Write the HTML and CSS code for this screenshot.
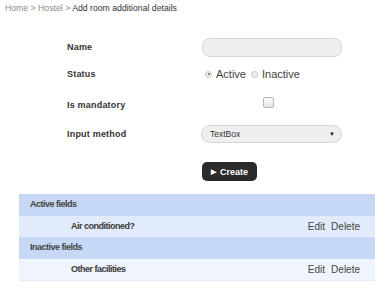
FILE: index.html
```html
<!DOCTYPE html>
<html lang="en">
<head>
  <meta charset="UTF-8" />
  <title>Add room additional details</title>
  <link rel="stylesheet" href="styles.css">
</head>
<body>
  <div class="breadcrumb">
    <span class="crumb">Home</span> &gt; <span class="crumb">Hostel</span> &gt; <span class="current">Add room additional details</span>
  </div>

  <form class="formulario">
    <div class="linha linha-nome">
      <label class="rotulo">Name</label>
      <div class="campo"><input type="text" class="caixa-texto"></div>
    </div>
    <div class="linha linha-status">
      <label class="rotulo">Status</label>
      <div class="campo opcoes">
        <span class="radio marcado"></span><span class="opcao">Active</span>
        <span class="radio"></span><span class="opcao">Inactive</span>
      </div>
    </div>
    <div class="linha linha-obrigatorio">
      <label class="rotulo">Is mandatory</label>
      <div class="campo centro"><span class="caixa-marcar"></span></div>
    </div>
    <div class="linha linha-metodo">
      <label class="rotulo">Input method</label>
      <div class="campo">
        <div class="selecao"><span>TextBox</span><span class="seta">▼</span></div>
      </div>
    </div>
    <div class="linha botoes">
      <div class="rotulo"></div>
      <div class="campo"><button type="button" class="botao-criar"><span class="play">▶</span>Create</button></div>
    </div>
  </form>

  <div class="tabela">
    <div class="cabecalho">Active fields</div>
    <div class="item escuro">
      <span class="nome">Air conditioned?</span>
      <span class="acoes"><span>Edit</span><span>Delete</span></span>
    </div>
    <div class="cabecalho">Inactive fields</div>
    <div class="item claro">
      <span class="nome">Other facilities</span>
      <span class="acoes"><span>Edit</span><span>Delete</span></span>
    </div>
  </div>
</body>
</html>
```

FILE: styles.css
```css
body {
  margin: 0;
  font-family: 'Liberation Sans', Arial, sans-serif;
  background: #fff;
  color: #333;
}

.breadcrumb {
  padding: 3px 5px 0;
  font-size: 8.7px;
  height: 14px;
  color: #8a8a8a;
}

.breadcrumb .current {
  color: #333;
}

.formulario {
  padding: 0 0 0 67px;
  margin-top: 16px;
}

.linha {
  display: flex;
  align-items: center;
  height: 28px;
}

.linha-status {
  height: 26px;
}

.linha-obrigatorio {
  height: 35px;
}

.linha-metodo {
  height: 24px;
}

.rotulo {
  flex-shrink: 0;
  width: 135px;
  font-size: 9px;
  font-weight: bold;
  color: #333;
  letter-spacing: 0.2px;
}

.campo {
  flex-shrink: 0;
  box-sizing: border-box;
  width: 140px;
}

.caixa-texto {
  display: block;
  box-sizing: border-box;
  width: 140px;
  height: 19px;
  border: 1px solid #d6d6d6;
  border-radius: 8px;
  background: #efefef;
  margin: 0;
}

.opcoes {
  display: flex;
  align-items: center;
  padding-left: 3px;
}

.radio {
  box-sizing: border-box;
  width: 7px;
  height: 7px;
  border-radius: 50%;
  border: 1px solid #c8c8c8;
  background: #ececec;
  margin-right: 4px;
  position: relative;
}

.radio.marcado::after {
  content: "";
  position: absolute;
  left: 1.5px;
  top: 1.5px;
  width: 2px;
  height: 2px;
  border-radius: 50%;
  background: #666;
}

.opcao {
  font-size: 11px;
  color: #444;
  margin-right: 5px;
}

.centro {
  display: flex;
  padding-left: 61px;
  margin-top: -4px;
}

.caixa-marcar {
  width: 9px;
  height: 9px;
  border: 1px solid #b5b5b5;
  border-radius: 2px;
  background: linear-gradient(#fafafa, #e6e6e6);
}

.selecao {
  box-sizing: border-box;
  width: 141px;
  height: 18px;
  border: 1px solid #d6d6d6;
  border-radius: 9px;
  background: #efefef;
  display: flex;
  align-items: center;
  justify-content: space-between;
  padding: 0 6px 0 8px;
  font-size: 8.5px;
  color: #333;
  margin-left: -1px;
}

.seta {
  font-size: 6px;
  color: #222;
}

.botoes {
  margin-top: 16px;
  height: 19px;
}

.botao-criar {
  display: flex;
  align-items: center;
  height: 19px;
  width: 55px;
  background: #2b2b2b;
  color: #fff;
  border: none;
  border-radius: 5px;
  font-family: 'Liberation Sans', Arial, sans-serif;
  font-size: 9px;
  font-weight: bold;
  padding: 0 0 0 9px;
}

.play {
  font-size: 7px;
  margin-right: 4px;
}

.tabela {
  margin: 13px 0 0 19px;
  font-size: 9px;
}

.cabecalho {
  height: 21.5px;
  line-height: 21.5px;
  background: #c7d7f6;
  font-weight: bold;
  padding-left: 11px;
  color: #444;
  letter-spacing: -0.5px;
}

.item {
  height: 21.5px;
  display: flex;
  align-items: center;
  justify-content: space-between;
  padding-left: 52px;
  color: #333;
}

.item .nome {
  font-weight: bold;
  letter-spacing: -0.5px;
  color: #3a3a3a;
}

.escuro {
  background: #e2ebfb;
}

.claro {
  background: #eff4fd;
  border-bottom: 1px solid #e5eaf5;
}

.acoes {
  display: flex;
  gap: 6px;
  padding-right: 15px;
  font-size: 10px;
  color: #444;
}
```
